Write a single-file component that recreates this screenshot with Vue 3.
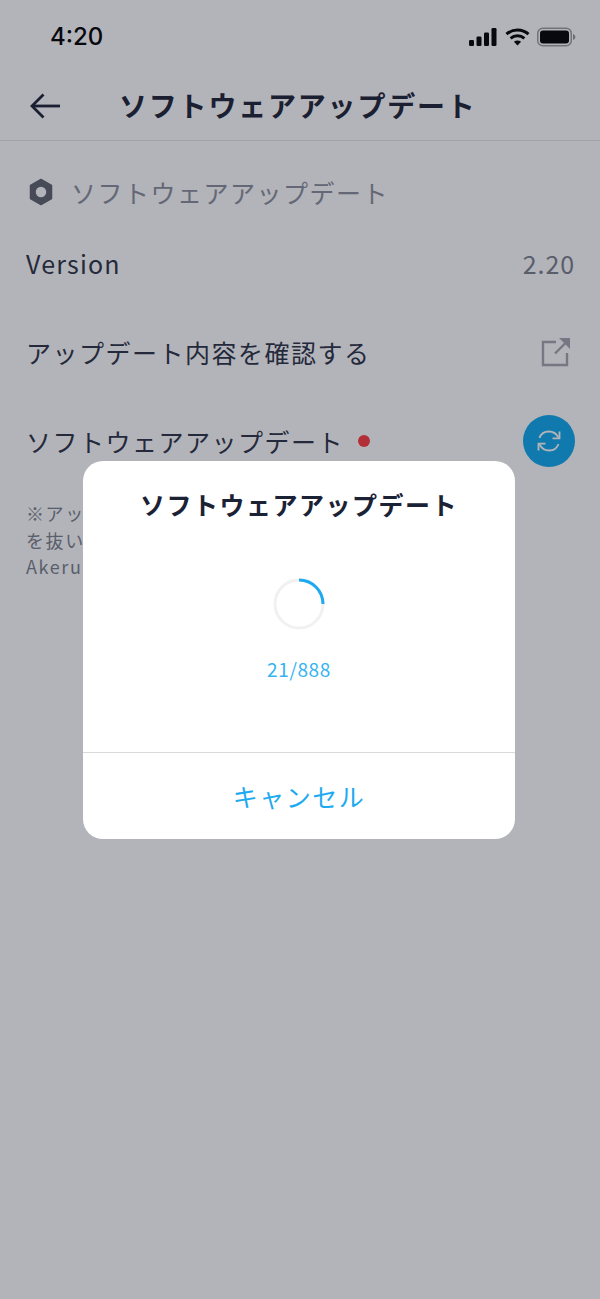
<script setup>
const title = 'ソフトウェアアップデート'
</script>

<template>
  <div class="page">
    <div class="status">
      <span class="time">4:20</span>
      <div class="status-icons">
        <svg width="28" height="18" viewBox="0 0 28 18"><rect x="0" y="12" width="5" height="6" rx="1.2"/><rect x="7.5" y="8.5" width="5" height="9.5" rx="1.2"/><rect x="15" y="4.5" width="5" height="13.5" rx="1.2"/><rect x="22.5" y="0" width="5" height="18" rx="1.2"/></svg>
        <svg width="25" height="18" viewBox="0 0 25 18" fill="none" stroke="#000" stroke-width="3"><path d="M1.5 6.2C7.6.6 17.4.6 23.5 6.2"/><path d="M5.6 10.3c3.9-3.3 9.900-3.300 13.800 0"/><path d="M12.5 17.600l-3.600-3.900c2-1.500 5.200-1.500 7.200 0z" fill="#000" stroke="none"/></svg>
        <svg width="39" height="20" viewBox="0 0 39 20"><rect x="0.75" y="1.25" width="33.5" height="17.5" rx="5" fill="none" stroke="#000" stroke-opacity=".38" stroke-width="1.5"/><rect x="3" y="3.5" width="29" height="13" rx="3"/><path d="M36 7v6c1.4-.5 2.4-1.7 2.4-3S37.400 7.500 36 7z" fill-opacity=".4"/></svg>
      </div>
    </div>

    <header class="header">
      <svg class="back" width="32" height="30" viewBox="0 0 32 30" fill="none" stroke="#1b2235" stroke-width="2.800"><path d="M31 15H3"/><path d="M14.500 3.500 3 15l11.500 11.500"/></svg>
      <h1>{{ title }}</h1>
    </header>

    <section class="section-title">
      <svg width="24" height="28" viewBox="0 0 24 28"><path fill-rule="evenodd" d="M12 1.500l10.500 6v13L12 26.500l-10.500-6v-13zM12 8a6 6 0 1 0 0 12 6 6 0 0 0 0-12z" fill="#5f626e" stroke="#5f626e" stroke-linejoin="round" stroke-width="1.500"/></svg>
      <span>{{ title }}</span>
    </section>

    <div class="row version">
      <span class="latin">Version</span>
      <span class="value">2.20</span>
    </div>
    <div class="row">
      <span>アップデート内容を確認する</span>
      <svg class="ext" width="30" height="30" viewBox="0 0 30 30" fill="none" stroke="#a3a5ad" stroke-width="2.400"><path d="M15 5H2v23h24V16"/><path d="M14 16.500 26 4.500"/><path d="M18 1h11v11z" fill="#a3a5ad" stroke="none"/></svg>
    </div>
    <div class="row update">
      <span class="update-label">{{ title }}<i class="dot"></i></span>
      <button class="refresh" aria-label="更新">
        <svg width="28" height="28" viewBox="0 0 28 28" fill="none" stroke="#ffffff" stroke-width="1.800"><path d="M4.500 11C6 6.500 10 4.500 14 4.500c3.500 0 7 1.500 9.500 6"/><path d="M24.500 4.500v6.800h-7"/><path d="M23.500 17C22 21.500 18 23.500 14 23.500c-3.500 0-7-1.500-9.500-6"/><path d="M3.500 23.500v-6.800h7"/></svg>
      </button>
    </div>

    <div class="note">
      <div>※アップデート中はアプリを閉じたり、本体の電池</div>
      <div>を抜いたりしないでください。完了するまでスマホを</div>
      <div>Akeruに近づけてください。</div>
    </div>

    <div class="overlay">
      <div class="modal">
        <div class="modal-body">
          <h2>{{ title }}</h2>
          <svg class="spinner" width="54" height="54" viewBox="0 0 54 54" fill="none" stroke-width="3">
            <circle cx="27" cy="27" r="24" stroke="#f1f1f1"/>
            <path d="M27 3a24 24 0 0 1 24 24" stroke="#1eaaf1"/>
          </svg>
          <div class="count">21/888</div>
        </div>
        <div class="cancel">キャンセル</div>
      </div>
    </div>
  </div>
</template>

<style scoped>
.page {
  position: relative;
  width: 600px;
  height: 1299px;
  overflow: hidden;
  background: #fff;
  color: #1b2235;
  font-family: "Noto Sans CJK JP", "Noto Sans", sans-serif;
}
.status {
  height: 72px;
  display: flex;
  align-items: center;
  justify-content: space-between;
  padding: 1px 24px 0 50px;
  box-sizing: border-box;
}
.time {
  font-family: Inter, sans-serif;
  font-size: 24px;
  font-weight: 500;
  color: #000;
}
.status-icons {
  display: flex;
  align-items: center;
  gap: 7px;
}
.status-icons svg:first-child {
  margin-right: 1px;
}
.header {
  height: 68px;
  display: flex;
  align-items: center;
  padding-left: 29px;
  border-bottom: 1px solid #e6e6e6;
}
.back {
  margin-right: 58px;
}
h1 {
  margin: 0 0 2px;
  font-size: 28px;
  line-height: 40px;
  font-weight: 700;
  letter-spacing: 1.800px;
}
.section-title {
  display: flex;
  align-items: center;
  height: 52px;
  margin-top: 25px;
  padding-left: 29px;
  gap: 18px;
  font-size: 25px;
  letter-spacing: 1.500px;
  color: #8a8e9c;
}
.row {
  display: flex;
  align-items: center;
  justify-content: space-between;
  height: 52px;
  padding: 0 25px 0 26px;
  font-size: 25px;
  letter-spacing: 1.500px;
  color: #2b3144;
  margin-top: 37px;
}
.version {
  margin-top: 19px;
  letter-spacing: 1.200px;
}
.value {
  color: #7b7f8c;
  letter-spacing: 0.900px;
}
.ext {
  margin-right: 4px;
}
.update-label {
  display: flex;
  align-items: center;
}
.dot {
  width: 12px;
  height: 12px;
  margin-left: 14px;
  border-radius: 50%;
  background: #fe3a3e;
}
.refresh {
  width: 52px;
  height: 52px;
  border: 0;
  padding: 0;
  border-radius: 50%;
  background: #0ca8ee;
  display: flex;
  align-items: center;
  justify-content: center;
}
.note {
  margin-top: 33px;
  padding-left: 26px;
  font-size: 18px;
  line-height: 26.500px;
  letter-spacing: 1.600px;
  color: #7b7f8c;
  white-space: nowrap;
}
.overlay {
  position: absolute;
  inset: 0;
  background: rgba(25, 27, 43, 0.33);
  display: flex;
  align-items: center;
  justify-content: center;
  padding-right: 2px;
  box-sizing: border-box;
}
.modal {
  width: 432px;
  height: 378px;
  border-radius: 20px;
  background: #fff;
  display: flex;
  flex-direction: column;
  overflow: hidden;
}
.modal-body {
  height: 291px;
  display: flex;
  flex-direction: column;
  align-items: center;
  border-bottom: 1px solid #d9d9d9;
}
h2 {
  margin: 23px 0 0;
  font-size: 25px;
  line-height: 40px;
  font-weight: 700;
  letter-spacing: 1.500px;
  color: #1b2235;
}
.spinner {
  margin-top: 53px;
}
.count {
  margin-top: 25px;
  font-size: 19px;
  line-height: 26px;
  letter-spacing: 0.600px;
  color: #35b3f3;
}
.cancel {
  flex: 1;
  display: flex;
  align-items: center;
  justify-content: center;
  font-size: 25px;
  letter-spacing: 1.500px;
  color: #1eaaf1;
}
</style>
